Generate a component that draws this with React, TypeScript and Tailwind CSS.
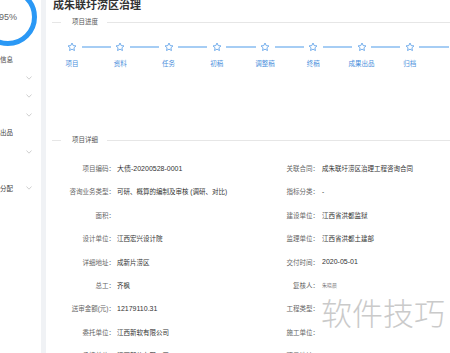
const steps = ["项目", "资料", "任务", "初稿", "调整稿", "终稿", "成果出品", "归档", "完结"];

const leftRows: [string, string][] = [
  ["项目编码：", "大债-20200528-0001"],
  ["咨询业务类型：", "可研、概算的编制及审核 (调研、对比)"],
  ["面积：", ""],
  ["设计单位：", "江西宏兴设计院"],
  ["详细地址：", "成新片涝区"],
  ["总工：", "齐枫"],
  ["送审金额(元)：", "12179110.31"],
  ["委托单位：", "江西新软有限公司"],
  ["承接单位：", "江西新软有限公司"],
];

const rightRows: [string, string][] = [
  ["关联合同：", "成朱联圩涝区治理工程咨询合同"],
  ["指标分类：", "-"],
  ["建设单位：", "江西省洪都监狱"],
  ["监理单位：", "江西省洪都土建部"],
  ["交付时间：", "2020-05-01"],
  ["复核人：", ""],
  ["工程类型：", ""],
  ["施工单位：", ""],
  ["项目地址：", ""],
];

const menu = [
  { text: "信息", chevron: false },
  { text: "", chevron: true },
  { text: "", chevron: true },
  { text: "", chevron: true },
  { text: "出品", chevron: false },
  { text: "", chevron: true },
  { text: "", chevron: false },
  { text: "分配", chevron: true },
];

function Star() {
  return (
    <svg width="10" height="10" viewBox="0 0 24 24" fill="none" stroke="#5a9fe8" strokeWidth="2" strokeLinejoin="round">
      <polygon points="12,2.5 14.9,8.6 21.5,9.4 16.6,13.9 17.9,20.5 12,17.2 6.1,20.5 7.4,13.9 2.5,9.4 9.1,8.6" />
    </svg>
  );
}

function Chevron() {
  return (
    <svg width="6" height="4" viewBox="0 0 6 4" fill="none" stroke="#c4c4c4" strokeWidth="0.8">
      <polyline points="0.5,0.5 3,3.2 5.5,0.5" />
    </svg>
  );
}

function Divider({ title }: { title: string }) {
  return (
    <div className="flex items-center h-[8px] pl-[6px]">
      <div className="w-[9px] h-px bg-[#e6e6e6]" />
      <span className="ml-[11px] mr-[9px] text-[6.5px] leading-[8px] text-[#555]">{title}</span>
      <div className="flex-1 h-px bg-[#e6e6e6]" />
    </div>
  );
}

function Value({ v, pad }: { v: string; pad: string }) {
  const size = /\d/.test(v) ? "text-[7px]" : "text-[6.5px]";
  return <span className={`${pad} ${size} text-[#333]`}>{v}</span>;
}

export default function App() {
  return (
    <div
      className="relative flex w-[450px] h-[353px] overflow-hidden bg-white"
      style={{ fontFamily: '"Liberation Sans", "Noto Sans CJK SC", sans-serif' }}
    >
      {/* sidebar */}
      <aside className="w-[41px] shrink-0 overflow-hidden bg-white">
        <svg width="62" height="62" viewBox="0 0 62 62" className="-ml-[23px] -mt-[14px] block">
          <circle cx="31" cy="31" r="26.5" fill="none" stroke="#2a98f5" strokeWidth="5" />
          <text x="31" y="34.2" fontSize="9" fill="#666" textAnchor="middle" fontFamily="Liberation Sans, sans-serif">
            95%
          </text>
        </svg>
        <div className="mt-[2.5px]">
          {menu.map((m, i) => (
            <div key={i} className="flex items-center justify-between h-[18.4px] pr-[9px]">
              <span className="text-[6.5px] text-[#444] whitespace-nowrap">{m.text}</span>
              {m.chevron && <Chevron />}
            </div>
          ))}
        </div>
      </aside>

      <div className="w-[5px] shrink-0 bg-[#f0f2f5]" />

      {/* content */}
      <main className="flex-1 min-w-0 bg-white">
        <h1 className="-mt-[1px] ml-[7px] h-[12px] text-[11px] leading-[12px] font-bold text-[#333] whitespace-nowrap">
          成朱联圩涝区治理
        </h1>

        <div className="mt-[7px]">
          <Divider title="项目进度" />
        </div>

        <div className="mt-[16px] pl-[1.875px] flex overflow-hidden">
          {steps.map((s, i) => (
            <div key={s} className="w-[48.25px] shrink-0 flex flex-col items-center">
              <div className="w-full h-[10px] flex items-center">
                <div className={`flex-1 h-[1.5px] ${i === 0 ? "bg-transparent" : "bg-[#a6cdf4]"}`} />
                <div className="mx-[4.5px] flex">
                  <Star />
                </div>
                <div className="flex-1 h-[1.5px] bg-[#a6cdf4]" />
              </div>
              <div className="mt-[6.5px] h-[9px] text-[6.5px] leading-[9px] text-[#4a8fdc] whitespace-nowrap">{s}</div>
            </div>
          ))}
        </div>

        <div className="mt-[68.5px]">
          <Divider title="项目详细" />
        </div>

        <div className="mt-[13.35px] pl-[6px] grid grid-cols-[202px_1fr]">
          {leftRows.map((l, i) => {
            const r = rightRows[i];
            return [
              <div key={`l${i}`} className="flex items-center h-[23.35px] whitespace-nowrap">
                <span className="w-[63px] text-right text-[6.5px] text-[#666]">{l[0]}</span>
                <Value v={l[1]} pad="pl-[2px]" />
              </div>,
              <div key={`r${i}`} className="flex items-center h-[23.35px] whitespace-nowrap">
                <span className="w-[65px] text-right text-[6.5px] text-[#666]">{r[0]}</span>
                {i === 5 ? (
                  <span className="pl-[3px] text-[5px] text-[#777]">朱晓晨</span>
                ) : (
                  <Value v={r[1]} pad="pl-[3px]" />
                )}
              </div>,
            ];
          })}
        </div>
      </main>

      {/* watermark */}
      <div className="absolute left-[321px] top-[299px] text-[31px] leading-none font-light text-[#b4b4b4] opacity-70 whitespace-nowrap pointer-events-none">
        软件技巧
      </div>
    </div>
  );
}
